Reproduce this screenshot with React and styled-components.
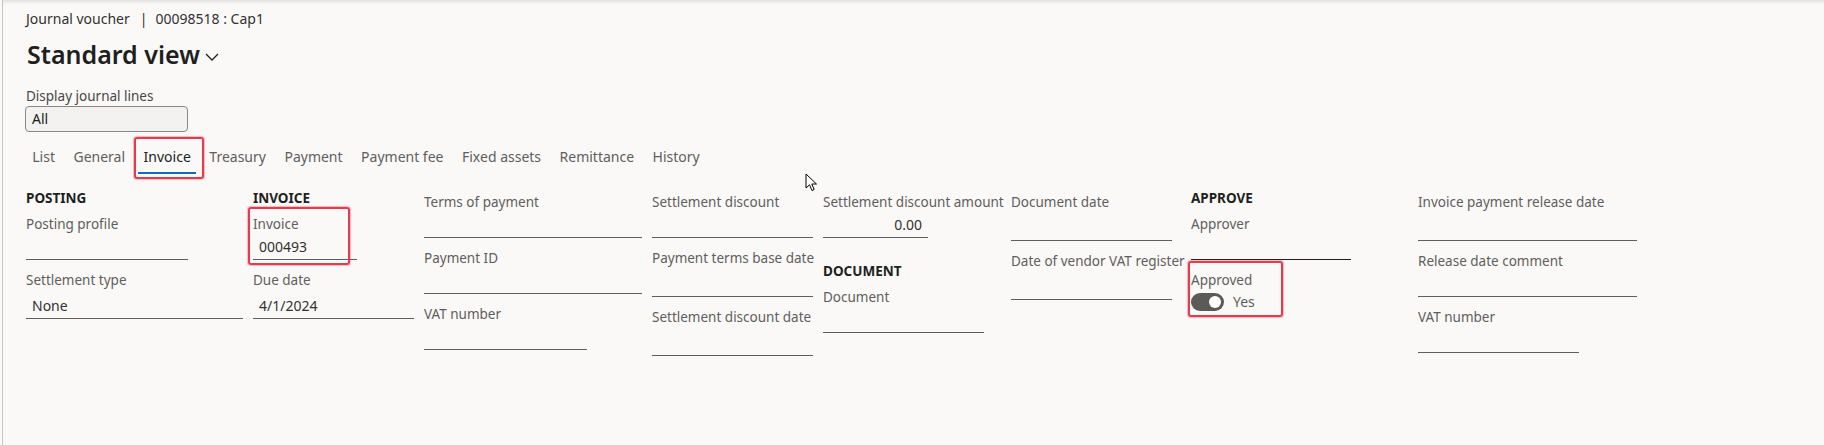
import React from "react";
import styled, { createGlobalStyle, css } from "styled-components";

const Global = createGlobalStyle`
  body {
    margin: 0;
    background: #faf9f8;
    font-family: "Noto Sans", "Open Sans", sans-serif;
  }
`;

const Page = styled.div`
  position: relative;
  box-sizing: border-box;
  min-height: 445px;
  margin-left: 2px;
  border-left: 1px solid #c8c6c4;
  padding: 9px 0 0 23px;
  box-shadow: inset 0 4px 4px -3px rgba(0, 0, 0, 0.14);
`;

const Breadcrumb = styled.div`
  font-size: 14px;
  line-height: 20px;
  color: #323130;
`;

const Sep = styled.span`
  margin: 0 8px 0 10px;
`;

const TitleRow = styled.div`
  display: flex;
  align-items: center;
  height: 32px;
  margin-top: 9px;
`;

const Title = styled.h1`
  margin: 0 0 0 1px;
  font-size: 25px;
  font-weight: 600;
  line-height: 32px;
  color: #201f1e;
`;

const Chevron = styled.svg`
  margin: 6px 0 0 5px;
`;

const FilterLabel = styled.div`
  margin-top: 17px;
  font-size: 13.5px;
  line-height: 18px;
  color: #484644;
`;

const Select = styled.div`
  box-sizing: border-box;
  width: 163px;
  height: 26px;
  margin: 1px 0 0 -1px;
  padding: 0 6px;
  border: 1px solid #8a8886;
  border-radius: 4px;
  background: #f3f2f1;
  font-size: 14px;
  line-height: 24px;
  color: #201f1e;
`;

const Tabs = styled.div`
  display: flex;
  margin: 10px 0 0 -3px;
`;

const Tab = styled.div`
  position: relative;
  box-sizing: border-box;
  height: 32px;
  padding: 5px 9.25px 7px;
  font-size: 14px;
  line-height: 20px;
  color: #605e5c;
  ${(p) =>
    p.$active &&
    css`
      color: #201f1e;
      &::after {
        content: "";
        position: absolute;
        left: 4px;
        right: 4px;
        bottom: 0;
        height: 2px;
        background: #0f6cbd;
      }
    `}
`;

/* red marker boxes drawn over the screenshot */
const Mark = styled.span`
  position: absolute;
  top: ${(p) => p.$t}px;
  left: ${(p) => p.$l}px;
  width: ${(p) => p.$w}px;
  height: ${(p) => p.$h}px;
  border: 2px solid #e63a4f;
  border-radius: 3px;
  box-shadow: 0 0 1px 1px rgba(230, 58, 79, 0.35);
  pointer-events: none;
`;

const Grid = styled.div`
  display: grid;
  grid-template-columns: 227px 171px 228px 171px 188px 180px 227px 1fr;
  align-items: start;
  margin-top: 14px;
`;

const Column = styled.div`
  display: flex;
  flex-direction: column;
  padding-top: ${(p) => (p.$headed ? 0 : 4)}px;
`;

const Section = styled.div`
  margin: ${(p) => (p.$later ? "13px" : "0")} 0 6px;
  font-size: 13.5px;
  font-weight: 700;
  line-height: 20px;
  color: #201f1e;
`;

const FieldBox = styled.div`
  position: relative;
  margin-bottom: 10px;
`;

const Label = styled.div`
  font-size: 13.5px;
  line-height: 20px;
  color: #605e5c;
  white-space: nowrap;
`;

const Input = styled.div`
  box-sizing: border-box;
  display: flex;
  align-items: flex-end;
  justify-content: ${(p) => (p.$right ? "flex-end" : "flex-start")};
  width: ${(p) => p.$w}px;
  height: ${(p) => (p.$tall ? 29 : 26)}px;
  padding: 0 6px 2px;
  border-bottom: 1px solid ${(p) => (p.$dark ? "#201f1e" : "#605e5c")};
  font-size: 14px;
  line-height: 20px;
  color: #323130;
`;

const ToggleRow = styled.div`
  display: flex;
  align-items: center;
  margin-top: 3px;
`;

const Switch = styled.div`
  position: relative;
  width: 33px;
  height: 18px;
  border-radius: 9px;
  background: #5c5a58;
  &::after {
    content: "";
    position: absolute;
    top: 3px;
    right: 3px;
    width: 12px;
    height: 12px;
    border-radius: 50%;
    background: #fff;
  }
`;

const SwitchText = styled.span`
  margin-left: 9px;
  font-size: 14px;
  line-height: 18px;
  color: #605e5c;
`;

const Cursor = styled.svg`
  position: absolute;
  left: 802px;
  top: 173px;
`;

function Field({ label, value, w, tall, right, dark, children }) {
  return (
    <FieldBox>
      <Label>{label}</Label>
      <Input $w={w} $tall={tall} $right={right} $dark={dark}>
        {value}
      </Input>
      {children}
    </FieldBox>
  );
}

const tabs = [
  "List",
  "General",
  "Invoice",
  "Treasury",
  "Payment",
  "Payment fee",
  "Fixed assets",
  "Remittance",
  "History",
];

export default function App() {
  return (
    <Page>
      <Global />
      <Breadcrumb>
        Journal voucher<Sep>|</Sep>00098518 : Cap1
      </Breadcrumb>
      <TitleRow>
        <Title>Standard view</Title>
        <Chevron width="14" height="8" viewBox="0 0 14 8">
          <polyline
            points="1,1 7,7 13,1"
            fill="none"
            stroke="#201f1e"
            strokeWidth="1.3"
          />
        </Chevron>
      </TitleRow>
      <FilterLabel>Display journal lines</FilterLabel>
      <Select>All</Select>

      <Tabs>
        {tabs.map((t) => (
          <Tab key={t} $active={t === "Invoice"}>
            {t}
            {t === "Invoice" && <Mark $t={-5} $l={0} $w={66} $h={38} />}
          </Tab>
        ))}
      </Tabs>

      <Grid>
        <Column $headed>
          <Section>POSTING</Section>
          <Field label="Posting profile" w={162} />
          <Field label="Settlement type" value="None" w={217} tall />
        </Column>
        <Column $headed>
          <Section>INVOICE</Section>
          <Field label="Invoice" value="000493" w={104}>
            <Mark $t={-7} $l={-5} $w={98} $h={54} />
          </Field>
          <Field label="Due date" value="4/1/2024" w={161} tall />
        </Column>
        <Column>
          <Field label="Terms of payment" w={218} />
          <Field label="Payment ID" w={218} />
          <Field label="VAT number" w={163} />
        </Column>
        <Column>
          <Field label="Settlement discount" w={161} />
          <Field label="Payment terms base date" w={161} tall />
          <Field label="Settlement discount date" w={161} tall />
        </Column>
        <Column>
          <Field label="Settlement discount amount" value="0.00" w={105} right />
          <Section $later>DOCUMENT</Section>
          <Field label="Document" w={161} />
        </Column>
        <Column>
          <Field label="Document date" w={161} tall />
          <Field label="Date of vendor VAT register" w={161} tall />
        </Column>
        <Column $headed>
          <Section>APPROVE</Section>
          <Field label="Approver" w={160} dark />
          <FieldBox>
            <Label>Approved</Label>
            <ToggleRow>
              <Switch />
              <SwitchText>Yes</SwitchText>
            </ToggleRow>
            <Mark $t={-9} $l={-3} $w={91} $h={52} />
          </FieldBox>
        </Column>
        <Column>
          <Field label="Invoice payment release date" w={219} tall />
          <Field label="Release date comment" w={219} />
          <Field label="VAT number" w={161} />
        </Column>
      </Grid>

      <Cursor width="13" height="19" viewBox="0 0 13 19">
        <path
          d="M1 1 L1 15 L4.5 11.8 L7 17.5 L9.2 16.5 L6.8 11 L11.5 11 Z"
          fill="#fff"
          stroke="#000"
          strokeWidth="1"
          strokeLinejoin="round"
        />
      </Cursor>
    </Page>
  );
}
